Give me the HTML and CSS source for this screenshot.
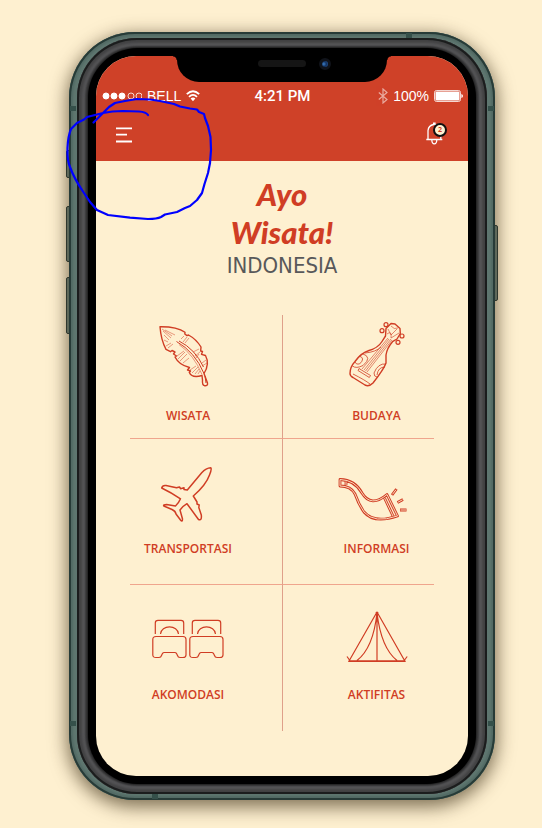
FILE: index.html
```html
<!DOCTYPE html>
<html lang="id">
<head>
<meta charset="utf-8">
<meta name="viewport" content="width=device-width, initial-scale=1">
<title>Ayo Wisata! Indonesia</title>
<link rel="stylesheet" href="styles.css">
</head>
<body>
<div class="phone">
  <span class="key key-mute"></span>
  <span class="key key-up"></span>
  <span class="key key-down"></span>
  <span class="key key-power"></span>
  <div class="frame">
    <span class="band band-tl"></span>
    <span class="band band-bl"></span>
    <span class="band band-tr"></span>
    <span class="band band-br"></span>
    <span class="band band-top"></span>
    <span class="band band-bottom"></span>
    <div class="bezel">
      <div class="glass">
        <div class="screen">
          <header class="header">
            <div class="status">
              <div class="status-left">
                <svg width="40" height="8" viewBox="0 0 40 8" fill="#fff" stroke="#fff" aria-hidden="true">
                  <circle cx="4" cy="4" r="3"/><circle cx="12" cy="4" r="3"/><circle cx="20" cy="4" r="3"/>
                  <circle cx="29" cy="4" r="3" fill="none" stroke-width=".8"/><circle cx="37" cy="4" r="3" fill="none" stroke-width=".8"/>
                </svg>
                <span>BELL</span>
                <svg width="14" height="12" viewBox="0 0 14 12" fill="none" stroke="#fff" stroke-width="1.8" aria-hidden="true">
                  <path d="M.8 4.2Q7-1.8 13.2 4.2M3 6.8Q7 3 11 6.8"/><path d="M4.6 8.6Q7 6.5 9.4 8.6L7 11.3Z" fill="#fff" stroke="none"/>
                </svg>
              </div>
              <span class="time">4:21 PM</span>
              <div class="status-right">
                <svg class="bluetooth" width="10" height="16" viewBox="0 0 10 16" fill="none" stroke="#fff" stroke-width="1.2" aria-hidden="true"><path d="M.8 4.5L9 11.5L5 15V1L9 4.5L.8 11.5"/></svg>
                <span>100%</span>
                <svg width="29" height="12" viewBox="0 0 29 12" aria-hidden="true"><rect x=".5" y=".5" width="26" height="11" rx="2" fill="none" stroke="#fff" stroke-width=".8"/><rect x="1.5" y="1.5" width="24" height="9" rx="1" fill="#fff"/><path d="M27.4 4Q29 4.5 29 6T27.4 8Z" fill="#fff"/></svg>
              </div>
            </div>
            <div class="toolbar">
              <button class="tool" type="button" aria-label="Menu">
                <svg width="28" height="28" viewBox="0 0 28 28" stroke="#fff" stroke-width="1.8" aria-hidden="true"><path d="M6 8.3H22M6 14.7H17M6 21.5H22"/></svg>
              </button>
              <button class="tool" type="button" aria-label="Notifikasi">
                <svg width="28" height="28" viewBox="0 0 28 28" fill="none" stroke="#fff" stroke-width="1.3" aria-hidden="true"><path d="M2.3 19.5H18.3M4 19.5V10.5Q4.5 5.5 9.6 4.5V3.2H11V4.5Q16.5 5.5 16.8 10.5V19.5M7.8 20Q8 23.8 10.3 23.8T12.8 20"/></svg>
                <span class="badge">2</span>
              </button>
            </div>
          </header>
          <span class="notch"><span class="speaker"></span><span class="camera"></span></span>
          <main class="main">
            <h1 class="logo"><span class="logo-script">Ayo</span><span class="logo-script">Wisata!</span><span class="logo-country">INDONESIA</span></h1>
            <nav class="tiles">
              <a class="tile" href="#wisata">
                <svg class="icon" viewBox="0 0 72 72" aria-hidden="true">
                  <path stroke-width="1.4" d="M8 3.7Q25 3.5 33 9.3L32.8 11L35 12.6L36.5 12Q44 16 49 24L48.7 28L50.5 28.5L49.5 31.3L53.5 32.5Q58 41 52 50.5L55.5 60Q56 63 52.5 62.7Q50 62 50.5 57L50 52.5Q40 55.5 37.3 49.5L38.5 48L35.5 47L37.5 44.5Q27 42 23 34L24.5 33L21.5 31L23 29L20 27.5L18.5 28.7L14 26.3Q9 17 8 3.7Z"/>
                  <path stroke-width="1" d="M24.5 18.5Q43 29 52 50.5M27 18Q43 26 51.5 44M53 53L54 60"/>
                  <path stroke-width=".5" d="M27 21.5Q42 32 50 51.5M10 6L20 13M11 8L19 15M13 7L23 12M12 12L17 17M32 13L29 16M35 14L31 19M37 15L33 20M47 26L41 29M48 29L43 33M47 31L44 35M54 37L50 40M55 40L50 43M14 23L19 20M16 25L21 21M25 33L32 28M26 36L33 29M28 38L35 31M31 40L37 35M38 47L44 43M40 50L46 44M43 51L47 46M46 51L48 48M12 17L16 19"/>
                </svg>
                <span>WISATA</span>
              </a>
              <a class="tile" href="#budaya">
                <svg class="icon" viewBox="0 0 72 72" aria-hidden="true">
                  <path stroke-width="1.4" d="M9 50.5Q9 44 14 38.5Q20 30 28 27.5Q37 25 41 18.5L44.5 13L45 5.5L50 .5L54 1L59 5.5L59.3 10.5L56 16L51.5 18.7Q46 25 45 32V40Q43 46 32 60Q28 64 24 62L12 54.5Q9 53 9 50.5Z"/>
                  <g stroke-width="1.2"><circle cx="45" cy="1.7" r="2"/><circle cx="41" cy="7.7" r="2"/><circle cx="61" cy="13" r="2"/><circle cx="57" cy="19.3" r="2"/></g>
                  <path stroke-width=".6" d="M21 46L47 15M23 47L48 16M24.5 48L50 16M26 49L51 17M47 6L50 12L56 6M46 11Q51 7 50 15M58 10L50 15M50 3Q53 7 57 5"/>
                  <path stroke-width=".8" d="M18 45.5L29.5 52.5L28.3 54.5L17 47.5ZM18 33Q25 35 18.5 41Q15 42 14 39M21 30.5Q32 34 22 42.5Q15 46 11.5 43M45 41Q37 40 33 50Q33 54 36 54M44 44Q37 44 36 52M12 51Q24 57 29 61M40 24Q35 29 24 30"/>
                </svg>
                <span>BUDAYA</span>
              </a>
              <a class="tile" href="#transportasi">
                <svg class="icon" viewBox="0 0 72 72" aria-hidden="true">
                  <path stroke-width="1.5" d="M58.8 11.8Q54 12 49.7 16.7L35.3 34L32 33.5V31.8L28.5 32.7L27.5 31L24.5 31.8L14 29.5Q10.500 29 9.700 32Q20 37 28.500 42.800Q26.500 47.500 23.500 50L14.500 48.500Q11 48.500 11.800 50L20 53.500Q23.500 55 24 58L28.500 64Q30.500 66.500 30.500 63L28 54Q31 50 35 47.700L46.500 63.500Q50 65 49.300 59L46.800 51.500L47.200 49L45 48V46L43.500 43.500L41.300 40Q54 29 57.500 19Q60 13 58.800 11.800Z"/>
                </svg>
                <span>TRANSPORTASI</span>
              </a>
              <a class="tile" href="#informasi">
                <svg class="icon" viewBox="0 0 72 72" aria-hidden="true">
                  <g stroke-width="2.8">
                    <path d="M-1 23.5V30Q10 30 14 38Q18 49 23 56Q33 68 56.5 60L46 38.5Q30 52 21 37Q14 24-1 23.5ZM5 25.5V29M43.500 42L52 60"/>
                    <path d="M51 39L55.500 33M56.500 46.500L62 43.500M59 54H65.500"/>
                  </g>
                  <g class="hollow" stroke-width="1">
                    <path d="M-1 23.500V30Q10 30 14 38Q18 49 23 56Q33 68 56.500 60L46 38.500Q30 52 21 37Q14 24-1 23.500ZM5 25.500V29M43.500 42L52 60"/>
                    <path d="M51.500 38.300L55 33.700M57 46.200L61.500 43.800M59.500 54H65"/>
                  </g>
                </svg>
                <span>INFORMASI</span>
              </a>
              <a class="tile" href="#akomodasi">
                <svg class="icon" viewBox="0 0 72 72" stroke-width="1.2" aria-hidden="true">
                  <path d="M3.3 32V21Q3.3 18.3 6 18.3H29Q31.7 18.3 31.7 21V32M8.5 32C9 22.5 26 22.5 26.5 32M4 34.5H31Q34 34.5 34 37.5V53Q34 55.5 31 55.5H28Q26 55.5 25.5 53.5Q24.5 50.5 23 50.5H12Q10.5 50.5 9.5 53.5Q9 55.5 7 55.5H4Q.8 55.5 .8 53V37.5Q.8 34.5 4 34.5Z"/>
                  <path transform="translate(37 0)" d="M3.3 32V21Q3.3 18.3 6 18.3H29Q31.7 18.3 31.7 21V32M8.5 32C9 22.5 26 22.5 26.5 32M4 34.5H31Q34 34.5 34 37.5V53Q34 55.5 31 55.5H28Q26 55.5 25.5 53.5Q24.5 50.5 23 50.5H12Q10.5 50.5 9.5 53.5Q9 55.5 7 55.5H4Q.8 55.5 .8 53V37.5Q.8 34.5 4 34.5Z"/>
                </svg>
                <span>AKOMODASI</span>
              </a>
              <a class="tile" href="#aktifitas">
                <svg class="icon" viewBox="0 0 72 72" stroke-width="1.2" aria-hidden="true">
                  <path d="M36 10L8.200 58.800H63.700ZM36 10V58.800M36 11Q32.200 46 16 58.500M36 11Q40.200 46 56 58.500M6 54.500L8.800 58.500M66.200 54.500L63.200 58.500M7.200 59.300H64.700M35.200 10L36 17L36.800 10"/>
                </svg>
                <span>AKTIFITAS</span>
              </a>
            </nav>
          </main>
        </div>
      </div>
    </div>
  </div>
  <svg class="scribble" width="160" height="130" viewBox="60 95 160 130" fill="none" stroke="#00f" stroke-width="2.2" stroke-linecap="round" stroke-linejoin="round" aria-hidden="true">
    <path d="M148 115Q146 112 139 111.5L123 111Q112 111 103 113L87 117L84 119.5L77 123L71 129Q68 136 67.5 148Q67 160 70 167Q74 178 82 190L90 202L97 210L108 215L130 217.7L148 219Q157 219 161 217L165 214.5L177 212L185 208L190 206L197 200L202 193L204.5 184L208 173L210 163L211 150L210.5 137L208 126L205 118L204 114L199 112L197 109.5L190 108.5L180 106.5L174 104L160 101L150 99.5L137 99L125 101L115 103L109 107L103 113L93.5 122.5"/>
  </svg>
</div>
</body>
</html>
```

FILE: styles.css
```css
* {
  box-sizing: border-box;
}

body {
  margin: 0;
  padding: 32px 47px 28px 69px;
  background: #fef0d0;
  font-family: "Open Sans", "Noto Sans", sans-serif;
}

/* Device */
.phone {
  position: relative;
}

.frame {
  position: relative;
  padding: 6px 8px;
  border-radius: 66px;
  background: #5e766f;
  box-shadow:
    inset 0 0 0 2px #273b37,
    inset 0 0 2px 4px #526a64,
    0 5px 18px 2px rgba(60, 45, 20, 0.65);
}

.bezel {
  padding: 10px 11px;
  border-radius: 60px;
  background: #3b3b3c;
  box-shadow:
    inset 0 0 0 2px #1b1d1d,
    inset 0 0 3px 5px #414142,
    inset 0 0 2px 8px #58585a;
}

.glass {
  padding: 8px;
  border-radius: 50px;
  background: #000;
  box-shadow: 0 0 3px #000;
}

.screen {
  position: relative;
  overflow: hidden;
  border-radius: 40px;
  background: #fef0d0;
}

.key {
  position: absolute;
  left: -3px;
  width: 5px;
  border: 1px solid #2b3d39;
  border-radius: 2px;
  background: #718a82;
}

.key-mute { top: 118px; height: 28px; }
.key-up { top: 174px; height: 56px; }
.key-down { top: 245px; height: 57px; }
.key-power { top: 193px; right: -3px; left: auto; height: 76px; }

.band {
  position: absolute;
  width: 6px;
  height: 5px;
  background: #35504a;
}

.band-tl { top: 74px; left: 1px; }
.band-bl { bottom: 74px; left: 1px; }
.band-tr { top: 74px; right: 1px; }
.band-br { bottom: 74px; right: 1px; }
.band-top { top: 1px; right: 83px; }
.band-bottom { bottom: 1px; left: 83px; }

.notch {
  position: absolute;
  top: 0;
  left: 50%;
  width: 210px;
  height: 26px;
  border-radius: 0 0 22px 22px;
  background: #000;
  transform: translateX(-50%);
}

.notch::before,
.notch::after {
  content: "";
  position: absolute;
  top: 0;
  width: 4px;
  height: 4px;
}

.notch::before {
  left: -4px;
  background: radial-gradient(circle at 0 100%, transparent 3px, #000 4px);
}

.notch::after {
  right: -4px;
  background: radial-gradient(circle at 100% 100%, transparent 3px, #000 4px);
}

.speaker {
  position: absolute;
  top: 4px;
  left: 81px;
  width: 48px;
  height: 7px;
  border-radius: 4px;
  background: #151515;
}

.camera {
  position: absolute;
  top: 2px;
  left: 142px;
  width: 12px;
  height: 12px;
  border: 3px solid #10131a;
  border-radius: 50%;
  background: radial-gradient(circle at 30% 50%, #3c7fc8, #12305e 50%, #2b5fa8);
}

/* Header */
.header {
  padding-top: 30px;
  background: #cf4128;
  color: #fff;
}

.status {
  display: grid;
  grid-template-columns: 1fr auto 1fr;
  align-items: center;
  height: 20px;
  padding: 0 5px 0 6px;
  font: 14px/20px "Liberation Sans", Arial, sans-serif;
}

.status-left,
.status-right {
  display: flex;
  align-items: center;
  gap: 5px;
}

.status-right {
  justify-content: flex-end;
}

.bluetooth {
  opacity: 0.55;
}

.time {
  font: 500 15px/20px Roboto, sans-serif;
}

.toolbar {
  display: flex;
  align-items: center;
  justify-content: space-between;
  height: 55px;
  padding: 0 16px 0 14px;
}

.tool {
  position: relative;
  width: 28px;
  height: 28px;
  padding: 0;
  border: 0;
  background: none;
}

.tool svg {
  display: block;
}

.badge {
  position: absolute;
  top: 3px;
  left: 9px;
  width: 14px;
  height: 14px;
  border: 2px solid #111;
  border-radius: 50%;
  background: #fef0d0;
  color: #cf4128;
  font: 700 7px/10px "Open Sans", sans-serif;
  text-align: center;
}

/* Content */
.main {
  padding: 14px 34px 45px;
}

.logo {
  display: flex;
  flex-direction: column;
  align-items: center;
  margin: 0 0 34px;
}

.logo-script {
  color: #d03d24;
  font: italic 900 31px/38px Lato, sans-serif;
}

.logo-country {
  color: #58585a;
  font: 400 22px/30px "DejaVu Sans Condensed", "DejaVu Sans", sans-serif;
}

.tiles {
  display: grid;
  grid-template-columns: 1fr 1fr;
}

.tile {
  display: flex;
  flex-direction: column;
  align-items: center;
  gap: 12px;
  padding: 17px 36px 26px 0;
  border-bottom: 1px solid #efa58d;
  color: #d03d24;
  font-size: 12px;
  font-weight: 600;
  line-height: 18px;
  text-decoration: none;
}

.tile:nth-child(even) {
  padding-right: 0;
  padding-left: 36px;
  border-left: 1px solid #dfa08a;
}

.tile:nth-child(-n+2) {
  padding-top: 8px;
  padding-bottom: 13px;
}

.tile:nth-last-child(-n+2) {
  border-bottom: 0;
  padding-bottom: 27px;
}

.icon {
  width: 72px;
  height: 72px;
  overflow: visible;
  fill: none;
  stroke: #d03d24;
  stroke-linejoin: round;
}

.hollow {
  stroke: #fbd9ba;
}

/* Pen mark drawn over the device */
.scribble {
  position: absolute;
  top: 63px;
  left: -9px;
}
```
